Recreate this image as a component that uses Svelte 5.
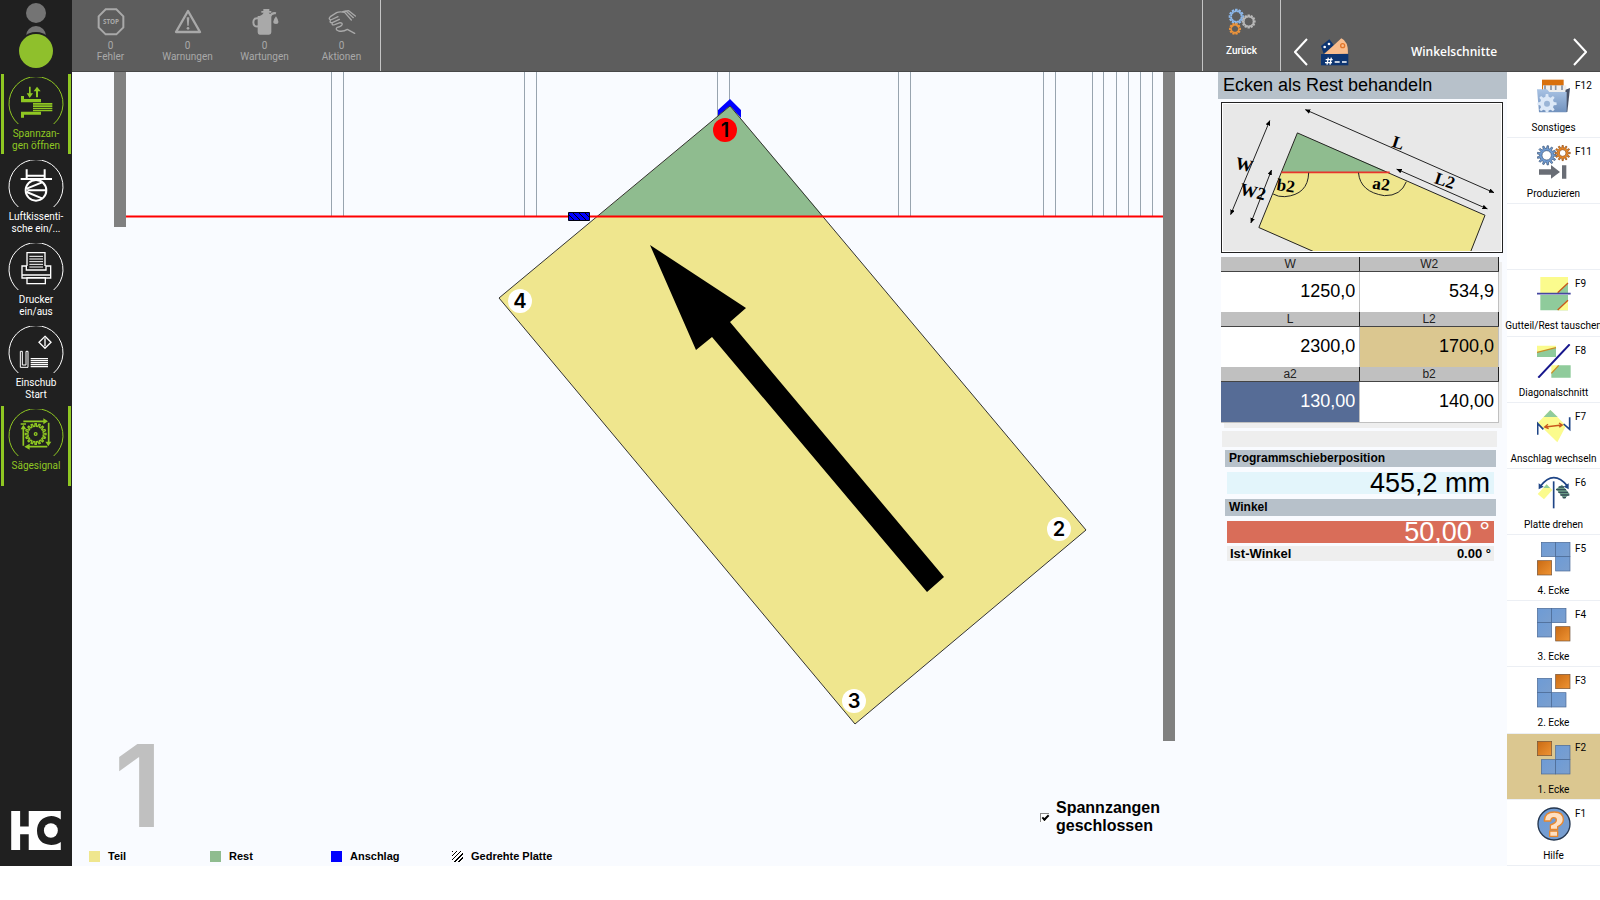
<script lang="ts">
	type Key = { key: string; label: string; icon: string };

	const states = [
		{ icon: 'stop', count: 0, label: 'Fehler' },
		{ icon: 'warn', count: 0, label: 'Warnungen' },
		{ icon: 'oil', count: 0, label: 'Wartungen' },
		{ icon: 'hand', count: 0, label: 'Aktionen' }
	];

	const machine = [
		{ icon: 'clamp', lines: ['Spannzan-', 'gen öffnen'], active: true },
		{ icon: 'air', lines: ['Luftkissenti-', 'sche ein/...'], active: false },
		{ icon: 'printer', lines: ['Drucker', 'ein/aus'], active: false },
		{ icon: 'feed', lines: ['Einschub', 'Start'], active: false },
		{ icon: 'saw', lines: ['Sägesignal'], active: true }
	];

	const keys: Key[] = [
		{ key: 'F12', label: 'Sonstiges', icon: 'folder' },
		{ key: 'F11', label: 'Produzieren', icon: 'produce' },
		{ key: '', label: '', icon: '' },
		{ key: 'F9', label: 'Gutteil/Rest tauschen', icon: 'swap' },
		{ key: 'F8', label: 'Diagonalschnitt', icon: 'diagonal' },
		{ key: 'F7', label: 'Anschlag wechseln', icon: 'stopper' },
		{ key: 'F6', label: 'Platte drehen', icon: 'turn' },
		{ key: 'F5', label: '4. Ecke', icon: 'corner4' },
		{ key: 'F4', label: '3. Ecke', icon: 'corner3' },
		{ key: 'F3', label: '2. Ecke', icon: 'corner2' },
		{ key: 'F2', label: '1. Ecke', icon: 'corner1' },
		{ key: 'F1', label: 'Hilfe', icon: 'help' }
	];

	// orange square first, then the three blue ones
	const cornerSquares: Record<string, number[][]> = {
		corner4: [[1, 56], [13, 1], [56, 1], [56, 44]],
		corner3: [[56, 56], [1, 1], [44, 1], [1, 44]],
		corner2: [[56, 1], [1, 13], [1, 56], [44, 56]],
		corner1: [[1, 1], [56, 13], [13, 56], [56, 56]]
	};

	let active = $state('F2');
	let clamped = $state(true);
	let values = $state([
		[{ name: 'W', value: '1250,0', tone: '' }, { name: 'W2', value: '534,9', tone: '' }],
		[{ name: 'L', value: '2300,0', tone: '' }, { name: 'L2', value: '1700,0', tone: 'locked' }],
		[{ name: 'a2', value: '130,00', tone: 'current' }, { name: 'b2', value: '140,00', tone: '' }]
	]);

	const supports = [331, 343, 524, 536, 717, 729, 898, 910, 1043, 1055, 1092, 1103, 1116, 1128, 1140, 1152];
	const corners = [
		{ n: 1, x: 725, y: 130 },
		{ n: 2, x: 1059, y: 529 },
		{ n: 3, x: 854, y: 701 },
		{ n: 4, x: 520, y: 301 }
	];

	function gear(cx: number, cy: number, outer: number, inner: number, teeth: number) {
		const pts: string[] = [];
		const step = (Math.PI * 2) / teeth;
		for (let i = 0; i < teeth; i++) {
			const a = i * step;
			for (const [off, r] of [[-0.3, inner], [-0.16, outer], [0.16, outer], [0.3, inner]]) {
				pts.push(`${(cx + Math.cos(a + off * step) * r).toFixed(2)},${(cy + Math.sin(a + off * step) * r).toFixed(2)}`);
			}
		}
		return 'M' + pts.join('L') + 'Z';
	}
</script>

{#snippet stateIcon(name: string)}
	<svg class="state-icon" viewBox="0 0 84 84" aria-hidden="true">
		{#if name === 'stop'}
			<path d="M26 4h32l21 21v33L58 79H26L5 58V25z" fill="none" stroke="#a9a9a9" stroke-width="6" />
			<text x="42" y="49" text-anchor="middle" class="stop-text">STOP</text>
		{:else if name === 'warn'}
			<path d="M42 9 78 72H6z" fill="none" stroke="#a9a9a9" stroke-width="7" stroke-linejoin="round" />
			<path d="M38 28h8l-2 25h-4z" fill="#a9a9a9" />
			<circle cx="42" cy="61" r="4" fill="#a9a9a9" />
		{:else if name === 'oil'}
			<path d="M37 3h18v6h6v5H31V9h6zM38 14h15l8 8v51q0 7-7 7H26q-6 0-6-7V24q12 0 18-10z" fill="#a9a9a9" />
			<path d="M22 31q-15-2-15 12t15 12" fill="none" stroke="#a9a9a9" stroke-width="6" />
			<path d="M57 25q6-12 18-9" fill="none" stroke="#a9a9a9" stroke-width="6" />
			<path d="M75 25q-17 22 0 23 15-1 0-23z" fill="#a9a9a9" />
		{:else}
			<path
				d="M26 14Q34 10 50 13L70 36M26 14 7 26Q0 33 8 36L30 26M8 36Q3 45 13 44L34 34M13 44Q10 53 20 50L36 44Q44 44 42 50 40 55 28 58 20 64 32 69 46 72 58 64L80 76M44 11l10-2 22 20M56 9l6-1 20 16"
				fill="none" stroke="#a9a9a9" stroke-width="4" stroke-linecap="round" stroke-linejoin="round" />
		{/if}
	</svg>
{/snippet}

{#snippet machineIcon(name: string)}
	<svg class="machine-icon" viewBox="0 0 168 150" aria-hidden="true" fill="none" stroke="currentColor">
		<path d="M31 141a81 81 0 1 1 106 0" stroke-width="3" />
		{#if name === 'clamp'}
			<g fill="currentColor" stroke="none">
				<path d="M39 57h9v9h51v10H39zM39 122h9v-9h51v-9H39z" />
				<path d="M75 78h58v5H75zM75 85h58v5H75zM75 92h58v5H75zM75 99h58v4H75z" />
				<path d="M63 29h5v20h7L65 63 56 49h7zM84 61h6V43h8L87 29 77 43h7z" />
			</g>
		{:else if name === 'air'}
			<path d="M38 57h94M56 28v26M110 28v26M56 47h54" stroke-width="6" />
			<circle cx="84" cy="91" r="31" stroke-width="6" />
			<path d="M56 86 102 67M56 96l46 19M58 91h56" stroke-width="6" />
		{:else if name === 'printer'}
			<path d="M57 69V29h54v40M42 69h13v12h59V69h14v36H42zM57 104h55v18H57zM42 96h86" stroke-width="4" />
			<path d="M64 40h41M64 48h41M64 56h41M64 64h41M64 72h41" stroke-width="3" />
		{:else if name === 'feed'}
			<path d="M37 76h6v41h11V76h6v48H37z" stroke-width="3" />
			<path d="M68 98h52M68 104h52M68 110h52M68 116h52M68 122h52" stroke-width="4" />
			<path d="m111 31 18 18-18 18-18-18zM111 37v24" stroke-width="4" />
		{:else}
			<path d={gear(83, 75, 31, 23, 16)} stroke-width="4" />
			<circle cx="83" cy="75" r="4" stroke-width="4" />
			<path d="M46 37h65M122 41v61M118 113H58M46 110V56M38 45h16" stroke-width="5" />
			<path d="m106 28 14 9-14 9zM112 98h18l-9 14zM65 104l-16 9 16 9zM38 61l8-14 9 14z" fill="currentColor" stroke="none" />
		{/if}
	</svg>
{/snippet}

{#snippet keyIcon(name: string)}
	<svg class="key-icon" viewBox="0 0 102 102" aria-hidden="true">
		{#if cornerSquares[name]}
			{#each cornerSquares[name] as [x, y], i}
				<rect {x} {y} width="43" height="43" fill={i ? 'url(#blue)' : 'url(#orange)'} stroke={i ? '#486792' : '#70513a'} stroke-width="2" />
			{/each}
		{:else if name === 'folder'}
			<path d="M15 2h65v40H15z" fill="#d9700c" />
			<path d="M18 19h70v30H18z" fill="#eee" />
			<path d="M24 19v20M42 19v14M56 19v14M75 19v14" stroke="#8793a4" stroke-width="5" />
			<path d="m86 32 13-5-8 72H78z" fill="#475065" />
			<path d="M0 31h30l7 8h52v61H6z" fill="url(#folder)" />
			<path d={gear(30, 74, 29, 21, 8)} fill="#dce8f7" />
			<circle cx="30" cy="74" r="9" fill="#9bb5d6" />
		{:else if name === 'produce'}
			<path d={gear(29, 31, 29, 21, 13)} fill="#6f9bd2" stroke="#375073" stroke-width="2" />
			<circle cx="29" cy="31" r="14" fill="#fff" stroke="#375073" stroke-width="2" />
			<path d={gear(77, 24, 23, 16, 12)} fill="#e98724" stroke="#8c4a16" stroke-width="2" />
			<circle cx="77" cy="24" r="10" fill="#fff" stroke="#8c4a16" stroke-width="2" />
			<path d="M6 73h36V60l27 21-27 20V89H6zM75 61h13v40H75z" fill="#696d75" />
		{:else if name === 'swap'}
			<path d="M10 0h83v48H10z" fill="#fbfb8d" />
			<path d="M10 54h83v46H10zM62 48l31-31v31z" fill="#8fcb9b" />
			<path d="m62 100 31-31v31z" fill="#fbfb8d" />
			<path d="m62 47 31-29M62 99l31-29" stroke="#c9571c" stroke-width="4" />
			<path d="M0 50h101" stroke="#4547a0" stroke-width="5" />
		{:else if name === 'diagonal'}
			<path d="M0 5h57v6L0 25zM43 64h22L43 88z" fill="#fbfb8d" />
			<path d="M0 25 57 11v28H0zM43 88l22-24h36v37H43z" fill="#8fcb9b" />
			<path d="M0 25 57 11M43 88l22-24" stroke="#c98c24" stroke-width="4" />
			<path d="M4 101 98 1" stroke="#16168c" stroke-width="6" />
		{:else if name === 'stopper'}
			<path d="m40 0 47 47-26 50L2 39z" fill="#fbfb8d" />
			<path d="m40 0 22 21H20z" fill="#8fcb9b" />
			<path d="m24 51 51-6M33 43l-10 8 12 5M66 39l10 6-9 7" fill="none" stroke="#c9571c" stroke-width="4" />
			<path d="M2 74V40l17 18M98 22v36L80 42" fill="none" stroke="#1f4586" stroke-width="5" />
		{:else if name === 'turn'}
			<path d="M10 31q40-52 82 0" fill="none" stroke="#1f4586" stroke-width="5" />
			<path d="M5 22v18l15-8zM95 22v18l-15-8z" fill="#1f4586" />
			<path d="m29 25 17 17-25 28L2 54z" fill="#fbfb8d" />
			<path d="m29 25 10 11H19z" fill="#8fcb9b" />
			<path d="m57 39 18-13 23 28-17 15z" fill="#6b9c86" />
			<path d="M65 33h16M57 41h30M64 49h29M70 57h27M77 65h10" stroke="#364f58" stroke-width="4" />
			<path d="M50 16v81" stroke="#1f4586" stroke-width="5" />
		{:else if name === 'help'}
			<circle cx="51" cy="51" r="48" fill="url(#blue)" stroke="#24364f" stroke-width="4" />
			<path d="M22 42q0-27 30-27 27 0 27 23 0 13-17 21v8H40V54q18-6 18-14 0-8-8-8t-9 10zM38 72h24v16H38z" fill="#ffe0c2" stroke="#e8882e" stroke-width="4" stroke-linejoin="round" />
		{/if}
	</svg>
{/snippet}

<svg class="defs" width="0" height="0" aria-hidden="true">
	<defs>
		<linearGradient id="blue" x1="0" y1="0" x2="1" y2="1">
			<stop offset="0" stop-color="#6d9bd6" />
			<stop offset="1" stop-color="#7b9fce" />
		</linearGradient>
		<linearGradient id="orange" x1="0" y1="0" x2="1" y2="1">
			<stop offset="0" stop-color="#c96a13" />
			<stop offset="1" stop-color="#ef9434" />
		</linearGradient>
		<linearGradient id="folder" x1="0" y1="0" x2="0" y2="1">
			<stop offset="0" stop-color="#a9c3e4" />
			<stop offset="1" stop-color="#7191bd" />
		</linearGradient>
		<pattern id="hatch" width="6" height="6" patternUnits="userSpaceOnUse">
			<path d="M0 0l6 6M-3 3l6 6M3-3l6 6" stroke="#000" stroke-width="1" />
		</pattern>
		<marker id="tip" viewBox="0 0 16 14" refX="15" refY="7" markerWidth="16" markerHeight="14" markerUnits="userSpaceOnUse" orient="auto-start-reverse">
			<path d="M0 0l16 7-16 7z" />
		</marker>
	</defs>
</svg>

<div class="shell">
	<aside class="sidebar">
		<svg class="lamp" viewBox="0 0 72 72" role="img" aria-label="Status">
			<circle cx="36" cy="13" r="10" fill="#747474" />
			<circle cx="36" cy="36" r="10" fill="#747474" />
			<circle cx="36" cy="51" r="19" fill="#202020" />
			<circle cx="36" cy="51" r="17" fill="#8fc02c" />
		</svg>
		{#each machine as m}
			<button type="button" class="machine" class:on={m.active}>
				{@render machineIcon(m.icon)}
				<span>{#each m.lines as line, i}{#if i}<br />{/if}{line}{/each}</span>
			</button>
		{/each}
		<svg class="logo" viewBox="0 0 150 118" role="img" aria-label="HC">
			<path d="M0 0h27v47h26V0h97v26q-12-11-29-11-42 4-43 45 1 41 43 43 17 0 29-9v24H53V70H27v48H0z" fill="#fff" />
			<ellipse cx="120" cy="59" rx="21" ry="22" fill="#fff" />
		</svg>
	</aside>

	<header class="topbar">
		<div class="states">
			{#each states as s}
				<button type="button" class="state">
					{@render stateIcon(s.icon)}
					<span>{s.count}</span>
					<span>{s.label}</span>
				</button>
			{/each}
		</div>
		<button type="button" class="back">
			<svg viewBox="0 0 84 80" aria-hidden="true" fill="none" stroke-width="4">
				<path d={gear(25, 25, 21, 15, 12)} stroke="#8db9ec" />
				<path d={gear(62, 40, 19, 14, 12)} stroke="#b9b9b9" />
				<path d={gear(21, 62, 16, 11, 10)} stroke="#ed943a" />
			</svg>
			<span>Zurück</span>
		</button>
		<nav class="views">
			<button type="button" class="step" aria-label="Vorherige Ansicht">
				<svg viewBox="0 0 14 28" aria-hidden="true"><path d="M13 1 1 14l12 13" /></svg>
			</button>
			<svg class="view-icon" viewBox="0 0 84 84" aria-hidden="true">
				<path d="M0 24 25 4l14 18L8 47z" fill="#0d3571" />
				<circle cx="11" cy="27" r="4" fill="#fff" />
				<circle cx="24" cy="18" r="4" fill="#fff" />
				<path d="M9 49 61 1q21 9 20 46z" fill="#f9bd8d" />
				<circle cx="65" cy="23" r="6" fill="none" stroke="#e2762a" stroke-width="4" />
				<path d="M0 48h82v34H0z" fill="#0d3571" />
				<path d="M14 65h21M12 74h21M22 59l-4 21M31 59l-4 21M41 72h15M63 72h14" stroke="#fff" stroke-width="4" />
			</svg>
			<h1>Winkelschnitte</h1>
			<button type="button" class="step" aria-label="Nächste Ansicht">
				<svg viewBox="0 0 14 28" aria-hidden="true"><path d="m1 1 12 13L1 27" /></svg>
			</button>
		</nav>
	</header>

	<main class="stage">
		<svg class="plan" viewBox="72 72 1146 670" role="img" aria-label="Schnittplan">
			{#each supports as x}
				<path d="M{x}.5 72V216" stroke="#98a4af" stroke-width="1" />
			{/each}
			<path d="M114 72h12v155h-12zM1163 72h12v669h-12z" fill="#808080" />
			<path d="m718 110 12-11 11 11v8l-11-12-12 10z" fill="#00f" />
			<path d="M730 106 1086 530 855 724 499 298z" fill="#efe68e" />
			<path d="M730 106 823 216H598z" fill="#8fbc8f" />
			<path d="M730 106 1086 530 855 724 499 298z" fill="none" stroke="#333" stroke-width="1" />
			<path d="M126 216.500H1163" stroke="#f00" stroke-width="2" />
			<path d="M568.500 212.500h21v8h-21z" fill="#00f" stroke="#001" />
			<path d="M569 213h20v7h-20z" fill="url(#hatch)" />
			<path d="M650 245 746 308 730 322 944 577 927 592 712 337 696 350z" />
			{#each corners as c}
				<circle cx={c.x} cy={c.y} r="12" fill={c.n === 1 ? '#f00' : '#fff'} />
				<text class="corner" x={c.x} y={c.y + 7} text-anchor="middle">{c.n}</text>
			{/each}
		</svg>
		<div class="below">
			<strong class="plate">1</strong>
			<label class="clamps">
				<input type="checkbox" bind:checked={clamped} />
				<span>Spannzangen<br />geschlossen</span>
			</label>
		</div>
		<ul class="legend">
			<li><i class="part"></i>Teil</li>
			<li><i class="rest"></i>Rest</li>
			<li><i class="fence"></i>Anschlag</li>
			<li><i class="turned"></i>Gedrehte Platte</li>
		</ul>
	</main>

	<section class="panel">
		<h2>Ecken als Rest behandeln</h2>
		<div class="sketch">
			<svg viewBox="98 313 837 443" role="img" aria-label="Maßskizze">
				<path d="M322 400 887 648 845 758H370L206 685z" fill="#efe68e" />
				<path d="M322 400 600 520H274z" fill="#8fbc8f" />
				<path d="M370 757 206 685 322 400 887 648 844 757" fill="none" stroke="#222" stroke-width="3" />
				<path d="M274 519h326" stroke="#e8342c" stroke-width="5" />
				<path d="M356 520q-2 66-72 72-20 1-35-8M506 520q5 58 78 69 50 1 66-42" fill="none" stroke="#222" stroke-width="3" />
				<g fill="none" stroke="#222" stroke-width="3" marker-start="url(#tip)">
					<path d="m346 330 568 250" marker-end="url(#tip)" />
					<path d="m621 509 273 120" marker-end="url(#tip)" />
					<path d="M239 363 121 646" marker-end="url(#tip)" />
					<path d="m244 512-62 159" marker-end="url(#tip)" />
				</g>
				<g class="dim" text-anchor="middle">
					<text transform="translate(620 446) rotate(18)">L</text>
					<text transform="translate(761 560) rotate(18)">L2</text>
					<text transform="translate(158 513) rotate(14)">W</text>
					<text transform="translate(184 594) rotate(14)">W2</text>
					<text transform="translate(285 576) rotate(8)">b2</text>
					<text transform="translate(572 571) rotate(8)">a2</text>
				</g>
			</svg>
		</div>

		<table>
			<tbody>
				{#each values as row}
					<tr class="names">
						{#each row as cell}<th scope="col" id={'n-' + cell.name}>{cell.name}</th>{/each}
					</tr>
					<tr>
						{#each row as cell}
							<td class={cell.tone}><input type="text" aria-labelledby={'n-' + cell.name} bind:value={cell.value} /></td>
						{/each}
					</tr>
				{/each}
			</tbody>
		</table>

		<div class="strip"></div>
		<div class="readout">
			<h3>Programmschieberposition</h3>
			<p class="big pos">455,2 mm</p>
			<h3>Winkel</h3>
			<p class="big angle">50,00 °</p>
			<p class="actual"><span>Ist-Winkel</span><span>0.00 °</span></p>
		</div>
	</section>

	<nav class="keys">
		{#each keys as k}
			{#if k.key}
				<button type="button" class="key" class:selected={active === k.key} onclick={() => (active = k.key)}>
					{@render keyIcon(k.icon)}
					<span class="fkey">{k.key}</span>
					<span class="name">{k.label}</span>
				</button>
			{:else}
				<div class="key"></div>
			{/if}
		{/each}
	</nav>
</div>

<style>
	:global(body) {
		margin: 0;
		background: #fff;
		font-family: 'Liberation Sans', Arial, sans-serif;
	}

	button {
		border: 0;
		padding: 0;
		background: none;
		color: inherit;
		font: inherit;
		cursor: pointer;
	}

	h1, h2, h3, p, ul {
		margin: 0;
		padding: 0;
		font-weight: normal;
	}

	svg {
		display: block;
	}

	.defs {
		position: absolute;
	}

	.shell {
		display: grid;
		grid-template-columns: 72px 1fr 289px 93px;
		grid-template-rows: 72px minmax(794px, auto);
		grid-template-areas: 'side top top top' 'side stage panel keys';
		background: #f9fbff;
	}

	/* left machine bar */
	.sidebar {
		grid-area: side;
		display: flex;
		flex-direction: column;
		align-items: center;
		background: #202020;
		color: #fff;
		font-family: Roboto, sans-serif;
		font-size: 10px;
		line-height: 12px;
	}

	.lamp {
		width: 72px;
		height: 72px;
		margin-bottom: 2px;
	}

	.machine {
		box-sizing: border-box;
		display: flex;
		flex-direction: column;
		align-items: center;
		width: 70px;
		height: 80px;
		margin-bottom: 3px;
		border: solid transparent;
		border-width: 0 3px;
	}

	.machine.on {
		border-color: #8fc722;
		color: #8fc722;
	}

	.machine-icon {
		width: 56px;
		height: 50px;
		margin: 3px 0 1px;
	}

	.logo {
		width: 50px;
		height: 39px;
		margin: auto 0 16px;
	}

	/* top bar */
	.topbar {
		grid-area: top;
		box-sizing: border-box;
		display: flex;
		border-bottom: 1px solid #484848;
		background: #5d5d5d;
		color: #fff;
	}

	.states {
		display: flex;
		margin-right: auto;
		border-right: 1px solid #c4c4c4;
	}

	.state {
		display: flex;
		flex-direction: column;
		align-items: center;
		width: 77px;
		padding-top: 8px;
		color: #a9a9a9;
		font-family: Roboto, sans-serif;
		font-size: 10px;
		line-height: 11px;
	}

	.state-icon {
		width: 28px;
		height: 28px;
		margin-bottom: 4px;
	}

	.stop-text {
		fill: #a9a9a9;
		font: bold 19px 'Open Sans', sans-serif;
	}

	.back {
		display: flex;
		flex-direction: column;
		align-items: center;
		width: 79px;
		padding-top: 8px;
		border: solid #c4c4c4;
		border-width: 0 1px;
		font: 500 10px/16px Roboto, sans-serif;
	}

	.back svg {
		width: 28px;
		height: 27px;
		margin-bottom: 8px;
	}

	.views {
		box-sizing: border-box;
		display: flex;
		align-items: center;
		width: 319px;
		padding: 33px 13px 0;
	}

	.step svg {
		width: 14px;
		height: 28px;
		fill: none;
		stroke: #fff;
		stroke-width: 2;
	}

	.view-icon {
		width: 28px;
		height: 28px;
		margin-left: 13px;
	}

	.views h1 {
		flex: 1;
		padding-right: 14px;
		font: 600 12px/18px 'Open Sans', sans-serif;
		text-align: center;
	}

	/* drawing area */
	.stage {
		grid-area: stage;
		display: flex;
		flex-direction: column;
	}

	.plan {
		width: 100%;
	}

	.corner {
		font: 600 20px Inter, sans-serif;
	}

	.below {
		display: flex;
		align-items: flex-end;
		justify-content: space-between;
		margin-top: auto;
		padding: 0 58px 0 42px;
	}

	.plate {
		color: #c0c0c0;
		font: 600 114px/84px Inter, sans-serif;
	}

	.clamps {
		display: flex;
		align-items: center;
		gap: 7px;
		margin-bottom: -7px;
		font-size: 16px;
		font-weight: bold;
		line-height: 18px;
	}

	.clamps input {
		appearance: none;
		display: grid;
		width: 9px;
		height: 9px;
		margin: 0;
		border: solid #8a8a8a;
		border-width: 1px 0 0 1px;
		background: #fff;
	}

	.clamps input:checked::before {
		content: '';
		width: 5px;
		height: 2px;
		margin: 1px;
		border: solid #000;
		border-width: 0 0 2px 2px;
		transform: rotate(-45deg);
	}

	.legend {
		display: flex;
		padding: 21px 0 3px 17px;
		list-style: none;
		font-size: 11px;
		font-weight: bold;
		line-height: 14px;
	}

	.legend li {
		display: flex;
		align-items: center;
		gap: 8px;
		width: 121px;
	}

	.legend i {
		width: 11px;
		height: 11px;
	}

	.part {
		background: #efe68e;
	}

	.rest {
		background: #8fbc8f;
	}

	.fence {
		background: #00f;
	}

	.turned {
		background: repeating-linear-gradient(135deg, #000 0 1px, #fff 1px 3px);
	}

	/* dimension panel */
	.panel {
		grid-area: panel;
	}

	.panel h2 {
		padding-left: 5px;
		background: #b7c1ca;
		font-size: 18px;
		line-height: 27px;
	}

	.sketch {
		margin: 3px 4px 4px 3px;
		border: 1px solid #222;
		padding: 1px;
		background: #e8e8e8;
		box-shadow: inset 0 0 0 1px #fff;
	}

	.dim {
		font: bold 52px 'Liberation Serif', serif;
	}

	table {
		width: 278px;
		margin-left: 3px;
		border-collapse: collapse;
		table-layout: fixed;
		box-shadow: 3px 5px 0 #eee;
	}

	th {
		height: 14px;
		padding: 0;
		border-right: 1px solid #222;
		border-bottom: 1px solid #444;
		background: #c0c0c0;
		color: #222;
		font-size: 12px;
		font-weight: normal;
		line-height: 14px;
	}

	td {
		height: 40px;
		padding: 0;
		border-right: 1px solid #c0c0c0;
		background: #fff;
	}

	tr:last-child td {
		border-bottom: 1px solid #c0c0c0;
	}

	td.locked {
		background: #dbc790;
	}

	td.current {
		background: #566c96;
		color: #fff;
	}

	td input {
		box-sizing: border-box;
		display: block;
		width: 100%;
		height: 38px;
		margin: 0;
		border: 0;
		padding: 0 4px 1px;
		background: none;
		color: inherit;
		font: 18px 'Liberation Sans', Arial, sans-serif;
		text-align: right;
	}

	.strip {
		height: 16px;
		margin: 8px 10px 3px 4px;
		background: #eee;
	}

	.readout {
		margin: 0 11px 0 7px;
	}

	.readout h3 {
		padding-left: 4px;
		background: #b7c1ca;
		font-size: 12px;
		font-weight: bold;
		line-height: 17px;
	}

	.big {
		margin: 5px 2px;
		padding-right: 4px;
		font-size: 27px;
		line-height: 22px;
		text-align: right;
	}

	.pos {
		background: #e3f5fb;
	}

	.angle {
		margin-bottom: 3px;
		background: #d96d59;
		color: #fff;
	}

	.actual {
		display: flex;
		justify-content: space-between;
		margin: 0 2px;
		padding: 0 3px;
		background: #eee;
		font-size: 13px;
		font-weight: bold;
		line-height: 15px;
	}

	/* function keys */
	.keys {
		grid-area: keys;
		display: grid;
		grid-auto-rows: minmax(66px, 1fr);
		background: #fff;
	}

	.key {
		box-sizing: border-box;
		display: grid;
		grid-template-columns: 34px 1fr;
		grid-template-rows: 34px 14px;
		align-content: start;
		column-gap: 4px;
		row-gap: 8px;
		padding: 7px 0 0 30px;
		border-bottom: 1px solid #eceff4;
		text-align: left;
		font-family: Roboto, sans-serif;
		font-size: 10px;
		line-height: 14px;
	}

	.key.selected {
		background: #dbc790;
	}

	.key-icon {
		width: 34px;
		height: 34px;
	}

	.name {
		grid-column: 1 / -1;
		justify-self: center;
		margin-left: -30px;
		white-space: nowrap;
	}
</style>
